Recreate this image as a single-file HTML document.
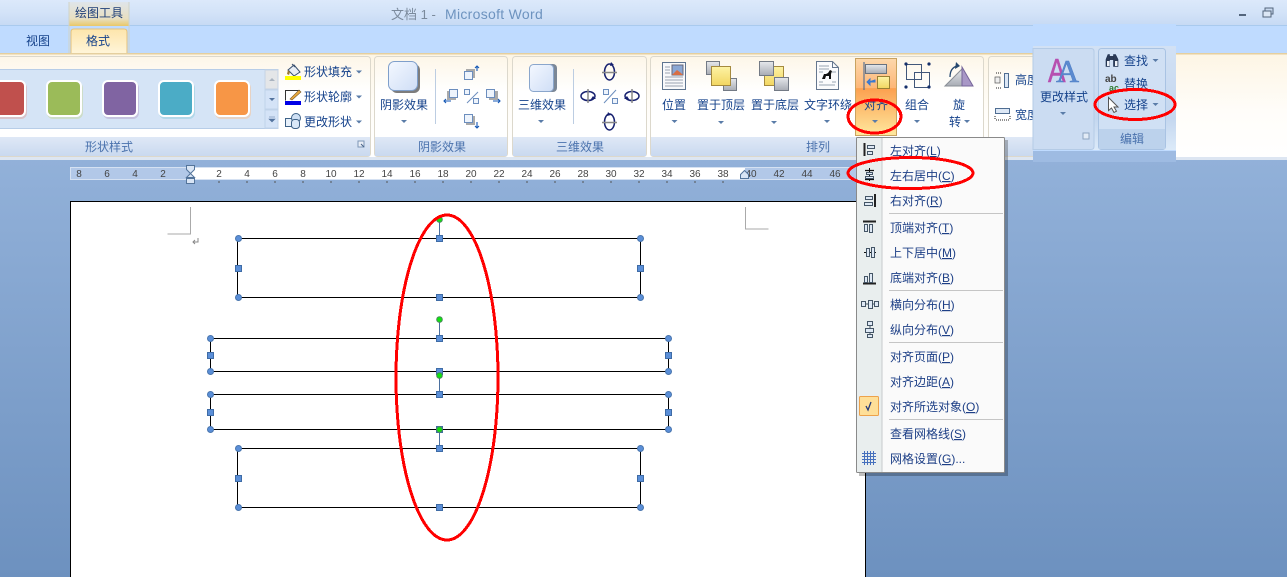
<!DOCTYPE html>
<html lang="zh"><head><meta charset="utf-8"><title>Word</title>
<style>
html,body{margin:0;padding:0;width:1287px;height:577px;overflow:hidden;background:#8fadd6}
svg{display:block}
text{font-family:"Liberation Sans","Noto Sans CJK SC",sans-serif;font-size:12px;fill:#15428b}
.m{text-anchor:middle}
.l{fill:#4a72ad;text-anchor:middle}
.r{font-size:10px;fill:#444;text-anchor:middle}
.u{fill:#1d3f86;font-size:12px;text-decoration:underline}
.u2{fill:#1d3f86;font-size:12px}
</style></head><body>
<svg width="1287" height="577" viewBox="0 0 1287 577" xmlns="http://www.w3.org/2000/svg">
<defs>
<linearGradient id="bg" x1="0" y1="0" x2="0" y2="1"><stop offset="0" stop-color="#a0bde3"/><stop offset="1" stop-color="#6d91bf"/></linearGradient>
<linearGradient id="ti" x1="0" y1="0" x2="0" y2="1"><stop offset="0" stop-color="#dce9fb"/><stop offset=".5" stop-color="#d3e3f8"/><stop offset="1" stop-color="#c7daf4"/></linearGradient>
<linearGradient id="gr" x1="0" y1="0" x2="0" y2="1"><stop offset="0" stop-color="#fdf6e8"/><stop offset=".35" stop-color="#fff"/><stop offset="1" stop-color="#fff"/></linearGradient>
<linearGradient id="rb" x1="0" y1="0" x2="0" y2="1"><stop offset="0" stop-color="#fdf5e4"/><stop offset=".55" stop-color="#fffdf9"/><stop offset="1" stop-color="#fff"/></linearGradient>
<linearGradient id="hd" x1="0" y1="0" x2="0" y2="1"><stop offset="0" stop-color="#dfe8f6"/><stop offset="1" stop-color="#c9d9ef"/></linearGradient>
<linearGradient id="tab" x1="0" y1="0" x2="0" y2="1"><stop offset="0" stop-color="#fde5ab"/><stop offset="1" stop-color="#fff5da"/></linearGradient>
<linearGradient id="ctx" x1="0" y1="0" x2="0" y2="1"><stop offset="0" stop-color="#dfe5ea"/><stop offset=".7" stop-color="#e8dfc0"/><stop offset="1" stop-color="#e9c767"/></linearGradient>
<linearGradient id="act" x1="0" y1="0" x2="0" y2="1"><stop offset="0" stop-color="#fdd8ac"/><stop offset=".38" stop-color="#fdb777"/><stop offset=".39" stop-color="#fca04f"/><stop offset="1" stop-color="#fee89e"/></linearGradient>
<linearGradient id="ov" x1="0" y1="0" x2="0" y2="1"><stop offset="0" stop-color="#d2e1f4"/><stop offset=".7" stop-color="#c4d7ef"/><stop offset="1" stop-color="#dceaf9"/></linearGradient>
<linearGradient id="sh" x1="0" y1="0" x2="1" y2="1"><stop offset="0" stop-color="#f4f8ff"/><stop offset="1" stop-color="#cfdef6"/></linearGradient>
<linearGradient id="yl" x1="0" y1="0" x2="0" y2="1"><stop offset="0" stop-color="#fdf3a5"/><stop offset="1" stop-color="#f2d661"/></linearGradient>
<linearGradient id="gy" x1="0" y1="0" x2="0" y2="1"><stop offset="0" stop-color="#e6e8ec"/><stop offset="1" stop-color="#a8acb4"/></linearGradient>
<g id="c"><circle r="3" fill="#5b8fd8" stroke="#4a76ae"/></g>
<g id="s"><rect x="-3" y="-3" width="6" height="6" fill="#5b8fd8" stroke="#3f6ca6"/></g>
<g id="g"><circle r="2.800" fill="#0de60d" stroke="#4a8a5a"/></g>
<path id="a" d="M-3 0h6l-3 3z" fill="#5a7ca8"/>
</defs>

<rect width="1287" height="577" fill="url(#bg)"/>
<rect width="1287" height="25" fill="url(#ti)"/>
<rect y="25" width="1287" height="1" fill="#a9caee"/>
<rect y="26" width="1287" height="27" fill="#bfdbff"/>

<!-- contextual tab -->
<rect x="69" y="2" width="60" height="24" fill="url(#ctx)"/>
<path d="M69 2v51M129 2v51" stroke="#cfd3c8"/>
<text x="99" y="17" class="m" style="fill:#1f3f78">绘图工具</text>
<text x="38" y="45" class="m">视图</text>
<path d="M71 54V32q0-3 3-3h50q3 0 3 3v22z" fill="url(#tab)" stroke="#e5c27a"/>
<text x="98" y="45" class="m">格式</text>

<text x="391" y="19" style="font-size:13px;fill:#7b8a9c">文档 1 - </text>
<text x="445" y="19" style="font-size:14px;fill:#6d93bf;letter-spacing:.3px">Microsoft Word</text>
<rect x="1239" y="14" width="7" height="2" fill="#53657c"/>
<rect x="1265" y="8" width="8" height="6" fill="#c9d9ee" stroke="#53657c"/><rect x="1263" y="11" width="8" height="6" fill="#dce7f5" stroke="#53657c"/>

<!-- ribbon -->
<rect y="53" width="1287" height="105" fill="url(#rb)"/>
<rect y="53" width="1287" height="1.5" fill="#e5cf9e"/>
<rect y="157" width="1287" height="3" fill="#dde6f2"/>

<!-- groups -->
<rect x="-5" y="56.500" width="375.500" height="100" rx="3" fill="url(#gr)" stroke="#dcd8cc"/>
<rect x="-5" y="137" width="375" height="19" fill="url(#hd)"/>
<rect x="374.500" y="56.500" width="133" height="100" rx="3" fill="url(#gr)" stroke="#dcd8cc"/>
<rect x="375" y="137" width="132" height="19" fill="url(#hd)"/>
<rect x="512.500" y="56.500" width="134" height="100" rx="3" fill="url(#gr)" stroke="#dcd8cc"/>
<rect x="513" y="137" width="133" height="19" fill="url(#hd)"/>
<rect x="650.500" y="56.500" width="333" height="100" rx="3" fill="url(#gr)" stroke="#dcd8cc"/>
<rect x="651" y="137" width="332" height="19" fill="url(#hd)"/>
<rect x="988.500" y="56.500" width="60" height="100" rx="3" fill="url(#gr)" stroke="#dcd8cc"/>
<rect x="989" y="137" width="59" height="19" fill="url(#hd)"/>

<text x="109" y="151" class="l">形状样式</text>
<text x="442" y="151" class="l">阴影效果</text>
<text x="580" y="151" class="l">三维效果</text>
<text x="818" y="151" class="l">排列</text>
<rect x="358" y="141" width="6" height="6" fill="#e9eef6" stroke="#7d96b6"/><path d="M361 144l3 3" stroke="#47648a"/>

<!-- gallery -->
<rect x="-2" y="69.500" width="280" height="59" fill="#d5e4f6" stroke="#b7cde8"/>
<rect x="265" y="70" width="13" height="19" fill="#e4e6e8" stroke="#c5d3e5"/>
<rect x="265" y="90" width="13" height="19" fill="#d4e3f7" stroke="#c0d3ea"/>
<rect x="265" y="110" width="13" height="18" fill="#d4e3f7" stroke="#c0d3ea"/>
<path d="M269 81h6l-3-3z" fill="#aab4c0"/><path d="M269 98h6l-3 3z" fill="#54749f"/><path d="M269 117h6M269 119h6l-3 3z" fill="#54749f" stroke="#54749f" stroke-width=".6"/>
<g fill="none" stroke-width="2" opacity=".55">
<rect x="-9" y="83" width="35" height="35" rx="5" stroke="#dca9a7"/>
<rect x="48" y="83" width="34" height="35" rx="5" stroke="#c7d8a4"/>
<rect x="104" y="83" width="34" height="35" rx="5" stroke="#b9a9cf"/>
<rect x="160" y="83" width="34" height="35" rx="5" stroke="#94d0e0"/>
<rect x="216" y="83" width="34" height="35" rx="5" stroke="#f6c49a"/>
</g>
<g stroke="#fff" stroke-width="2">
<rect x="-10" y="81" width="35" height="35" rx="5" fill="#c0504d"/>
<rect x="47" y="81" width="34" height="35" rx="5" fill="#9bbb59"/>
<rect x="103" y="81" width="34" height="35" rx="5" fill="#8064a2"/>
<rect x="159" y="81" width="34" height="35" rx="5" fill="#4bacc6"/>
<rect x="215" y="81" width="34" height="35" rx="5" fill="#f79646"/>
</g>

<!-- shape fill etc -->
<path d="M288 70l6-5 6 7-6 4z" fill="#e7edf5" stroke="#39506f"/><path d="M292 64l3 3" stroke="#39506f"/><path d="M288 70l-1 4 2 1 1-3z" fill="#9a7a35"/>
<rect x="285" y="76" width="16" height="4" fill="#ff0"/>
<text x="304" y="76">形状填充</text><use href="#a" x="359" y="70.500"/>
<path d="M300 90.500h-14.500v10" fill="none" stroke="#333"/><path d="M290 99l9-9 2 2-9 8z" fill="#e9a83b" stroke="#7a5a2a" stroke-width=".6"/>
<rect x="285" y="101" width="16" height="4" fill="#0000e6"/>
<text x="304" y="101">形状轮廓</text><use href="#a" x="359" y="95.500"/>
<rect x="285.500" y="118.500" width="8" height="8" fill="#e7f0fa" stroke="#3e6288"/><circle cx="296" cy="118" r="4.500" fill="#cfe0f4" stroke="#3e6288"/><rect x="291.500" y="119.500" width="8" height="9" rx="3" fill="#d9e8f8" stroke="#3e6288"/>
<text x="304" y="126">更改形状</text><use href="#a" x="359" y="120.500"/>

<!-- shadow group -->
<rect x="391" y="64" width="29" height="29" rx="6" fill="#7d7d7d"/>
<rect x="388.500" y="61.500" width="29" height="29" rx="6" fill="url(#sh)" stroke="#7f9fcb"/>
<text x="404" y="109" class="m">阴影效果</text><use href="#a" x="404" y="120"/>
<rect x="435" y="69" width="1" height="55" fill="#bccde2"/>
<g fill="#eef4fc" stroke="#6c8ebe">
<rect x="466" y="69" width="9" height="9" fill="#aaa" stroke="none"/><rect x="464.500" y="71.500" width="8" height="8"/>
<rect x="447" y="91" width="9" height="9" fill="#aaa" stroke="none"/><rect x="449.500" y="89.500" width="8" height="8"/>
<rect x="489" y="91" width="9" height="9" fill="#aaa" stroke="none"/><rect x="486.500" y="89.500" width="8" height="8"/>
<rect x="466" y="116" width="9" height="9" fill="#aaa" stroke="none"/><rect x="464.500" y="114.500" width="8" height="8"/>
<rect x="464.500" y="89.500" width="5" height="5"/><rect x="473.500" y="98.500" width="5" height="5"/>
</g>
<path d="M467 103l11-11" stroke="#6c8ebe"/>
<path d="M477 71v-5M475 68l2-2 2 2M444 101h7M446 99l-2 2 2 2M493 101h7M498 99l2 2-2 2M477 122v6M475 126l2 2 2-2" fill="none" stroke="#1457b5" stroke-width="1.100"/>

<!-- 3d group -->
<rect x="533" y="64" width="24" height="28" rx="4" fill="#7b8796"/>
<rect x="529.500" y="64.500" width="24" height="27" rx="4" fill="url(#sh)" stroke="#8aa6cc"/>
<text x="542" y="109" class="m">三维效果</text><use href="#a" x="541" y="120"/>
<rect x="573" y="69" width="1" height="55" fill="#bccde2"/>
<g fill="none" stroke="#16206f" stroke-width="1.500">
<ellipse cx="609.500" cy="72" rx="5" ry="8"/>
<ellipse cx="609.500" cy="122" rx="5" ry="8"/>
<ellipse cx="588" cy="96" rx="7" ry="4.500"/>
<ellipse cx="632" cy="96" rx="7" ry="4.500"/>
</g>
<path d="M611 62l3 3-4 1zM608 112l3 3-4 1zM593 96l3 3-5 0zM627 96l-3 3 5 0z" fill="#16206f"/>
<path d="M602 72.500h15M602 122.500h15M588 89v14M632 89v14" stroke="#888" stroke-width="1.500"/>
<rect x="603.500" y="89.500" width="5" height="5" fill="#eef4fc" stroke="#6c8ebe"/><rect x="612.500" y="98.500" width="5" height="5" fill="#eef4fc" stroke="#6c8ebe"/><path d="M604 103l12-13" stroke="#6c8ebe"/>

<!-- arrange: position -->
<rect x="662.500" y="62.500" width="23" height="27" fill="#f8f9fb" stroke="#5f7590"/>
<rect x="672" y="65" width="11" height="10" fill="#8aa7d4" stroke="#667"/><path d="M672 75l5-5 4 3 2 2z" fill="#d86f45"/>
<path d="M665 67h5M665 70h5M665 73h5M665 77h18M665 80h18M665 83h18M665 86h18" stroke="#9aa4b2"/>
<text x="674" y="109" class="m">位置</text><use href="#a" x="674.500" y="120"/>

<!-- bring front -->
<rect x="706.500" y="61.500" width="13" height="13" fill="url(#gy)" stroke="#737a85"/>
<rect x="723.500" y="78.500" width="13" height="12" fill="url(#gy)" stroke="#737a85"/>
<rect x="711.500" y="66.500" width="19" height="19" fill="url(#yl)" stroke="#a58a3e"/>
<text x="721" y="109" class="m">置于顶层</text><use href="#a" x="721" y="121"/>

<!-- send back -->
<rect x="764.500" y="66.500" width="19" height="19" fill="url(#yl)" stroke="#a58a3e"/>
<rect x="759.500" y="61.500" width="14" height="14" fill="url(#gy)" stroke="#737a85"/>
<rect x="774.500" y="77.500" width="14" height="13" fill="url(#gy)" stroke="#737a85"/>
<text x="775" y="109" class="m">置于底层</text><use href="#a" x="774" y="121"/>

<!-- wrap -->
<path d="M816.500 61.500h16l6 6v22h-22z" fill="#fbfbfc" stroke="#66778e"/>
<path d="M832.500 61.500v6h6" fill="none" stroke="#66778e"/>
<path d="M819 66h10M819 69h10M819 85h16M819 82h4M832 82h4M819 72h4M832 72h4" stroke="#9aa4b2"/>
<path d="M822 79l2-5 2 0 2-1 2-3 2 1-1 3 0 5-2 0 0-3-3 0-1 3z" fill="#111"/>
<text x="828" y="109" class="m">文字环绕</text><use href="#a" x="827" y="120"/>

<!-- align active -->
<rect x="855.500" y="58.500" width="41" height="77" fill="url(#act)" stroke="#c9a360"/>
<rect x="865.500" y="64.500" width="21" height="9" fill="url(#gy)" stroke="#69727f"/>
<rect x="877.500" y="76.500" width="12" height="12" fill="url(#yl)" stroke="#9a7f33"/>
<path d="M864 62v28" stroke="#3d6191"/><path d="M867 82h8v-2.500M867 82l3-3v6z" fill="#3a79d0" stroke="#3a79d0"/>
<text x="876" y="109" class="m">对齐</text><use href="#a" x="875" y="120"/>

<!-- group -->
<g fill="none" stroke="#41577a"><rect x="906.500" y="64.500" width="15" height="15"/><rect x="914.500" y="72.500" width="15" height="15"/></g>
<g fill="#16306a"><circle cx="906" cy="87" r="1.600"/><circle cx="929" cy="64" r="1.600"/><circle cx="906" cy="64" r="1.600"/><circle cx="929" cy="87" r="1.600"/></g>
<text x="917" y="109" class="m">组合</text><use href="#a" x="917" y="120"/>

<!-- rotate -->
<path d="M945 86l17-17v17z" fill="url(#gy)" stroke="#8a8f96"/><path d="M962 67l11 19h-11z" fill="#a897c6" stroke="#76659a"/>
<path d="M950 77q0-9 7-11" fill="none" stroke="#26486f" stroke-width="1.300"/><path d="M956 62l4 4-5 3z" fill="#26486f"/>
<text x="959" y="109" class="m">旋</text><text x="955" y="126" class="m">转</text><use href="#a" x="967" y="120"/>

<!-- size -->
<path d="M996 73h5M996 88h5" stroke="#222" stroke-dasharray="1 1"/><rect x="995" y="77" width="5" height="6" fill="#eee" stroke="#555" stroke-width=".7"/><rect x="1004.500" y="73.500" width="4" height="14" fill="#dde8f6" stroke="#4f6d92"/>
<text x="1015" y="84">高度</text>
<rect x="995.500" y="108.500" width="14" height="5" fill="#dde8f6" stroke="#4f6d92"/><path d="M995 116v4M1010 116v4M996 120h13" stroke="#222" stroke-dasharray="1 1"/>
<text x="1015" y="119">宽度</text>

<!-- pasted overlay -->
<rect x="1033" y="24" width="143" height="138" fill="#bfdbff"/>
<rect x="1033" y="46" width="143" height="104" fill="url(#ov)"/>
<rect x="1033" y="151" width="143" height="11" fill="#9ebbe2"/>
<path d="M1033 48.500h58q3 0 3 3v95q0 3-3 3h-58z" fill="#cbdcf2" stroke="#b4cbe6"/>
<rect x="1098.500" y="48.500" width="67" height="101" rx="3" fill="#d0e0f4" stroke="#a9c3e3"/>
<rect x="1099" y="129" width="66" height="20" fill="#bcd2ec"/>
<text transform="translate(1048 82) scale(.8 1)" style="font-size:33px;fill:#b74fb0;stroke:#b74fb0;stroke-width:.5">A</text>
<text x="1056" y="82" style="font-family:'Liberation Serif',serif;font-size:32px;fill:#5b8ad0;stroke:#4f7fc6;stroke-width:.5">A</text>
<text x="1064" y="101" class="m">更改样式</text><use href="#a" x="1063" y="112"/>
<rect x="1083" y="133" width="6" height="6" fill="#e2ebf6" stroke="#8ea4c0"/>
<text x="1132" y="143" class="l">编辑</text>
<path d="M1106 66.500v-7l2-5h1.500v12zM1113.500 66.500v-12h2l2.500 5v7z" fill="#2c3a55" stroke="#1a2c4d" stroke-width=".6"/>
<rect x="1107" y="61" width="2.500" height="5" fill="#eef2f8"/><rect x="1115" y="61" width="2.500" height="5" fill="#eef2f8"/><rect x="1109.500" y="56" width="4" height="4" fill="#2c3a55"/>
<text x="1124" y="65">查找</text><use href="#a" x="1155.500" y="59"/>
<text x="1105" y="82" style="font-size:10px;fill:#444;font-weight:bold">ab</text>
<text x="1109" y="91" style="font-size:9px;fill:#2e7a2e;font-weight:bold">ac</text>
<text x="1124" y="88">替换</text>
<path d="M1108.500 97.500v13l3-2.500 2.500 4.500 2.500-1.300-2.500-4.200h4z" fill="#fff" stroke="#555"/>
<text x="1124" y="109">选择</text><use href="#a" x="1155.500" y="103"/>

<!-- ruler -->
<rect x="70.500" y="167.500" width="794" height="12" fill="#b2c8e8" stroke="#d5e1f2"/>
<rect x="191" y="168" width="554" height="11" fill="#fff"/>
<g class="r"><text class="r" x="79" y="177">8</text><text class="r" x="107" y="177">6</text><text class="r" x="135" y="177">4</text><text class="r" x="163" y="177">2</text><text class="r" x="219" y="177">2</text><text class="r" x="247" y="177">4</text><text class="r" x="275" y="177">6</text><text class="r" x="303" y="177">8</text><text class="r" x="331" y="177">10</text><text class="r" x="359" y="177">12</text><text class="r" x="387" y="177">14</text><text class="r" x="415" y="177">16</text><text class="r" x="443" y="177">18</text><text class="r" x="471" y="177">20</text><text class="r" x="499" y="177">22</text><text class="r" x="527" y="177">24</text><text class="r" x="555" y="177">26</text><text class="r" x="583" y="177">28</text><text class="r" x="611" y="177">30</text><text class="r" x="639" y="177">32</text><text class="r" x="667" y="177">34</text><text class="r" x="695" y="177">36</text><text class="r" x="723" y="177">38</text><text class="r" x="751" y="177">40</text><text class="r" x="779" y="177">42</text><text class="r" x="807" y="177">44</text><text class="r" x="835" y="177">46</text></g>
<path d="M219 181v2M247 181v2M275 181v2M303 181v2M331 181v2M359 181v2M387 181v2M415 181v2M443 181v2M471 181v2M499 181v2M527 181v2M555 181v2M583 181v2M611 181v2M639 181v2M667 181v2M695 181v2M723 181v2" stroke="#555"/>
<path d="M186.500 165.500h8v4l-4 4-4-4zM186.500 177.500l4-4 4 4zM186.500 178.500h8v5h-8z" fill="#d9e5f5" stroke="#54749a"/>
<path d="M740.500 178.500v-4l4-4 4 4v4z" fill="#d9e5f5" stroke="#54749a"/>

<!-- page -->
<rect x="70" y="201" width="795.500" height="376" fill="#fff"/>
<path d="M70.500 577V201.500H865.500V577" fill="none" stroke="#000" stroke-width="1"/>
<path d="M190.500 207v27h-23M745.500 207v22h23" fill="none" stroke="#aaa"/>
<path d="M198 238v4h-5M195 240l-2 2 2 2" fill="none" stroke="#888"/>

<!-- shapes -->
<g fill="none" stroke="#000" stroke-width="1">
<rect x="237.500" y="238.500" width="403" height="59"/>
<rect x="210.500" y="338.500" width="458" height="33"/>
<rect x="210.500" y="394.500" width="458" height="35"/>
<rect x="237.500" y="448.500" width="403" height="59"/>
</g>
<path d="M439.500 220v18M439.500 319v19M439.500 375v19M439.500 429v19" stroke="#4a6f9f"/>
<use href="#c" x="238.500" y="238.500"/><use href="#c" x="640.500" y="238.500"/><use href="#c" x="238.500" y="297.500"/><use href="#c" x="640.500" y="297.500"/>
<use href="#s" x="238.500" y="268.500"/><use href="#s" x="640.500" y="268.500"/><use href="#s" x="439.500" y="238.500"/><use href="#s" x="439.500" y="297.500"/>
<use href="#c" x="210.500" y="338.500"/><use href="#c" x="668.500" y="338.500"/><use href="#c" x="210.500" y="371.500"/><use href="#c" x="668.500" y="371.500"/>
<use href="#s" x="210.500" y="355.500"/><use href="#s" x="668.500" y="355.500"/><use href="#s" x="439.500" y="338.500"/><use href="#s" x="439.500" y="371.500"/>
<use href="#c" x="210.500" y="394.500"/><use href="#c" x="668.500" y="394.500"/><use href="#c" x="210.500" y="429.500"/><use href="#c" x="668.500" y="429.500"/>
<use href="#s" x="210.500" y="412.500"/><use href="#s" x="668.500" y="412.500"/><use href="#s" x="439.500" y="394.500"/><use href="#s" x="439.500" y="429.500"/>
<use href="#c" x="238.500" y="448.500"/><use href="#c" x="640.500" y="448.500"/><use href="#c" x="238.500" y="507.500"/><use href="#c" x="640.500" y="507.500"/>
<use href="#s" x="238.500" y="478.500"/><use href="#s" x="640.500" y="478.500"/><use href="#s" x="439.500" y="448.500"/><use href="#s" x="439.500" y="507.500"/>
<use href="#g" x="439.500" y="219.500"/><use href="#g" x="439.500" y="319.500"/><use href="#g" x="439.500" y="375.500"/><use href="#g" x="439.500" y="429.500"/>

<!-- menu -->
<rect x="859" y="140" width="149" height="336" fill="#000" opacity=".25"/>
<rect x="856.500" y="137.500" width="148" height="335" rx="1" fill="#fafafa" stroke="#8a8a8a"/>
<rect x="857" y="138" width="25" height="334" fill="#e9eeee"/>
<rect x="881.500" y="138" width="1" height="334" fill="#c6cbcc"/>
<path d="M889 213.500h114M889 290.500h114M889 342.500h114M889 419.500h114" stroke="#c5c5c5"/>
<g fill="#1d3f86">
<text class="u2" x="890" y="155">左对齐(<tspan class="u">L</tspan>)</text>
<text class="u2" x="890" y="180">左右居中(<tspan class="u">C</tspan>)</text>
<text class="u2" x="890" y="205">右对齐(<tspan class="u">R</tspan>)</text>
<text class="u2" x="890" y="232">顶端对齐(<tspan class="u">T</tspan>)</text>
<text class="u2" x="890" y="257">上下居中(<tspan class="u">M</tspan>)</text>
<text class="u2" x="890" y="282">底端对齐(<tspan class="u">B</tspan>)</text>
<text class="u2" x="890" y="309">横向分布(<tspan class="u">H</tspan>)</text>
<text class="u2" x="890" y="334">纵向分布(<tspan class="u">V</tspan>)</text>
<text class="u2" x="890" y="361">对齐页面(<tspan class="u">P</tspan>)</text>
<text class="u2" x="890" y="386">对齐边距(<tspan class="u">A</tspan>)</text>
<text class="u2" x="890" y="411">对齐所选对象(<tspan class="u">O</tspan>)</text>
<text class="u2" x="890" y="438">查看网格线(<tspan class="u">S</tspan>)</text>
<text class="u2" x="890" y="463">网格设置(<tspan class="u">G</tspan>)...</text>
</g>
<!-- menu icons -->
<g fill="none" stroke="#222">
<path d="M864.500 143v13" stroke-width="2"/><rect x="867.500" y="145.500" width="7" height="3" stroke="#456" fill="#dfe9f5"/><rect x="867.500" y="151.500" width="5" height="3" stroke="#456" fill="#dfe9f5"/>
<path d="M865 170.500h9M865 179.500h9" stroke="#111" stroke-width="1.300"/><path d="M869.500 168v13" stroke="#111"/><rect x="866.500" y="172.500" width="6" height="2" stroke="#456" fill="#dfe9f5"/><rect x="865.500" y="176.500" width="8" height="2" stroke="#456" fill="#dfe9f5"/>
<path d="M875 194v13" stroke-width="2"/><rect x="865.500" y="196.500" width="7" height="3" stroke="#456" fill="#dfe9f5"/><rect x="864.500" y="202.500" width="8" height="3" stroke="#456" fill="#dfe9f5"/>
<path d="M863 221.500h13" stroke-width="2"/><rect x="864.500" y="224.500" width="3" height="7" stroke="#456" fill="#dfe9f5"/><rect x="869.500" y="224.500" width="3" height="8" stroke="#456" fill="#dfe9f5"/>
<path d="M864 252.500h12" stroke="#111"/><rect x="866.500" y="248.500" width="3" height="8" stroke="#456" fill="#dfe9f5"/><rect x="871.500" y="247.500" width="3" height="10" stroke="#456" fill="#dfe9f5"/>
<path d="M863 283.500h13" stroke-width="2"/><rect x="864.500" y="276.500" width="3" height="6" stroke="#456" fill="#dfe9f5"/><rect x="869.500" y="273.500" width="3" height="9" stroke="#456" fill="#dfe9f5"/>
<rect x="861.500" y="301.500" width="4" height="5" stroke="#456" fill="#dfe9f5"/><rect x="868.500" y="300.500" width="4" height="8" stroke="#456" fill="#dfe9f5"/><rect x="874.500" y="301.500" width="4" height="5" stroke="#456" fill="#dfe9f5"/><path d="M865 304h3M872 304h3" stroke="#456"/>
<rect x="867.500" y="321.500" width="5" height="4" stroke="#456" fill="#dfe9f5"/><rect x="865.500" y="328.500" width="8" height="4" stroke="#456" fill="#dfe9f5"/><rect x="867.500" y="334.500" width="5" height="3" stroke="#456" fill="#dfe9f5"/><path d="M870 325v3M870 332v3" stroke="#456"/>
</g>
<rect x="859.500" y="396.500" width="19" height="19" rx="1" fill="#fedf98" stroke="#eda24b"/>
<path d="M866 406l2 4 3-8" fill="none" stroke="#233a7a" stroke-width="1.300"/>
<path d="M864.500 451v14M867.500 451v14M870.500 451v14M873.500 451v14M862 453.500h14M862 456.500h14M862 459.500h14M862 462.500h14" stroke="#4670bd"/>

<!-- red ellipses -->
<g fill="none" stroke="#ff0000" stroke-width="3" shape-rendering="crispEdges">
<ellipse cx="447" cy="377.500" rx="51" ry="162.500"/>
<ellipse cx="874.500" cy="116.500" rx="26.500" ry="16.500"/>
<ellipse cx="910.500" cy="173" rx="62.500" ry="15.500"/>
<ellipse cx="1135" cy="104.500" rx="40" ry="15"/>
</g>
</svg>
</body></html>
